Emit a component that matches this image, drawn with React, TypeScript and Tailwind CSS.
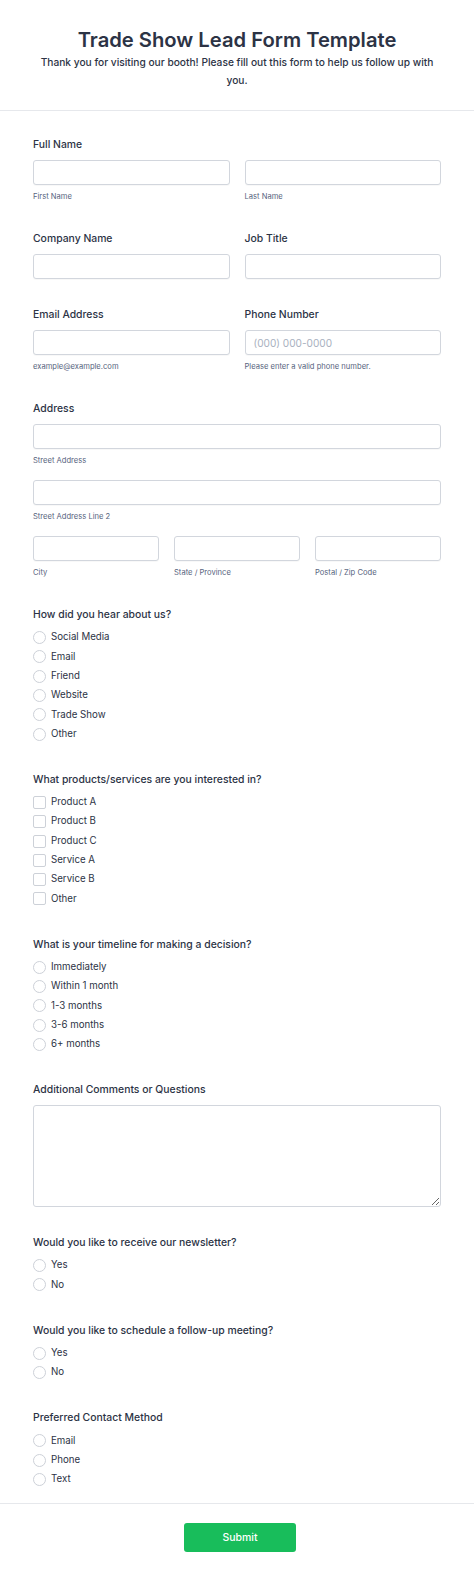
import React from 'react';

const font = { fontFamily: 'Inter, "Noto Sans", sans-serif' };

const Label = ({ children }: { children: React.ReactNode }) => (
    <div className="text-[10.4px] leading-4 font-medium text-[#2c3345]">{children}</div>
);

const Sub = ({ children }: { children: React.ReactNode }) => (
    <div className="mt-[6px] text-[7.6px] leading-3 text-[#57647e]">{children}</div>
);

const Input = ({ placeholder }: { placeholder?: string }) => (
    <input
        placeholder={placeholder}
        className="block w-full h-[25px] rounded-[3px] border border-[#d2d6dd] bg-white px-2 text-[10.1px] text-[#2c3345] placeholder:text-[#a9b1c0] outline-none shadow-[0_1px_1px_rgba(0,0,0,0.03)]"
    />
);

const Choices = ({ items, type }: { items: string[]; type: 'radio' | 'checkbox' }) => (
    <div className="mt-[5px] flex flex-col">
        {items.map((item) => (
            <label key={item} className="flex items-center h-[19.3px] gap-[5px]">
                <span
                    className={
                        type === 'radio'
                            ? 'w-[13px] h-[13px] rounded-full border border-[#cdd1d8] bg-white'
                            : 'w-[13px] h-[13px] rounded-[2px] border border-[#cdd1d8] bg-white'
                    }
                />
                <span className="text-[9.7px] text-[#2c3345]">{item}</span>
            </label>
        ))}
    </div>
);

export default function App() {
    return (
        <div className="min-h-[1578px] w-full bg-white" style={font}>
            {/* Header */}
            <div className="h-[111px] border-b border-[#e6e8ec] flex flex-col items-center pt-[27px] px-8 text-center">
                <h1 className="text-[20.2px] leading-[26px] font-semibold text-[#2c3345]">Trade Show Lead Form Template</h1>
                <p className="text-[10.2px] leading-[18px] font-medium text-[#2c3345]">
                    Thank you for visiting our booth! Please fill out this form to help us follow up with you.
                </p>
            </div>

            <div className="px-[33px] pt-[26px] pb-[14px] flex flex-col gap-[28px] border-b border-[#e6e8ec]">
                {/* Full Name */}
                <div>
                    <Label>Full Name</Label>
                    <div className="mt-[7px] grid grid-cols-2 gap-[15px]">
                        <div>
                            <Input />
                            <Sub>First Name</Sub>
                        </div>
                        <div>
                            <Input />
                            <Sub>Last Name</Sub>
                        </div>
                    </div>
                </div>

                <div className="grid grid-cols-2 gap-[15px]">
                    <div>
                        <Label>Company Name</Label>
                        <div className="mt-[7px]"><Input /></div>
                    </div>
                    <div>
                        <Label>Job Title</Label>
                        <div className="mt-[7px]"><Input /></div>
                    </div>
                </div>

                <div className="grid grid-cols-2 gap-[15px]">
                    <div>
                        <Label>Email Address</Label>
                        <div className="mt-[7px]"><Input /></div>
                        <Sub>example@example.com</Sub>
                    </div>
                    <div>
                        <Label>Phone Number</Label>
                        <div className="mt-[7px]"><Input placeholder="(000) 000-0000" /></div>
                        <Sub>Please enter a valid phone number.</Sub>
                    </div>
                </div>

                {/* Address */}
                <div>
                    <Label>Address</Label>
                    <div className="mt-[7px]">
                        <Input />
                        <Sub>Street Address</Sub>
                    </div>
                    <div className="mt-[13px]">
                        <Input />
                        <Sub>Street Address Line 2</Sub>
                    </div>
                    <div className="mt-[13px] grid grid-cols-3 gap-[15px]">
                        <div>
                            <Input />
                            <Sub>City</Sub>
                        </div>
                        <div>
                            <Input />
                            <Sub>State / Province</Sub>
                        </div>
                        <div>
                            <Input />
                            <Sub>Postal / Zip Code</Sub>
                        </div>
                    </div>
                </div>

                <div>
                    <Label>How did you hear about us?</Label>
                    <Choices type="radio" items={['Social Media', 'Email', 'Friend', 'Website', 'Trade Show', 'Other']} />
                </div>

                <div>
                    <Label>What products/services are you interested in?</Label>
                    <Choices type="checkbox" items={['Product A', 'Product B', 'Product C', 'Service A', 'Service B', 'Other']} />
                </div>

                <div>
                    <Label>What is your timeline for making a decision?</Label>
                    <Choices type="radio" items={['Immediately', 'Within 1 month', '1-3 months', '3-6 months', '6+ months']} />
                </div>

                <div>
                    <Label>Additional Comments or Questions</Label>
                    <textarea className="mt-[7px] block w-full h-[102px] rounded-[3px] border border-[#d2d6dd] bg-white outline-none" />
                </div>

                <div>
                    <Label>Would you like to receive our newsletter?</Label>
                    <Choices type="radio" items={['Yes', 'No']} />
                </div>

                <div>
                    <Label>Would you like to schedule a follow-up meeting?</Label>
                    <Choices type="radio" items={['Yes', 'No']} />
                </div>

                <div>
                    <Label>Preferred Contact Method</Label>
                    <Choices type="radio" items={['Email', 'Phone', 'Text']} />
                </div>
            </div>

            {/* Footer */}
            <div className="flex justify-center pt-[19px] pl-[6px]">
                <button className="w-[112px] h-[29px] rounded-[3px] bg-[#18bd5b] text-white text-[10.5px] font-medium">
                    Submit
                </button>
            </div>
        </div>
    );
}
